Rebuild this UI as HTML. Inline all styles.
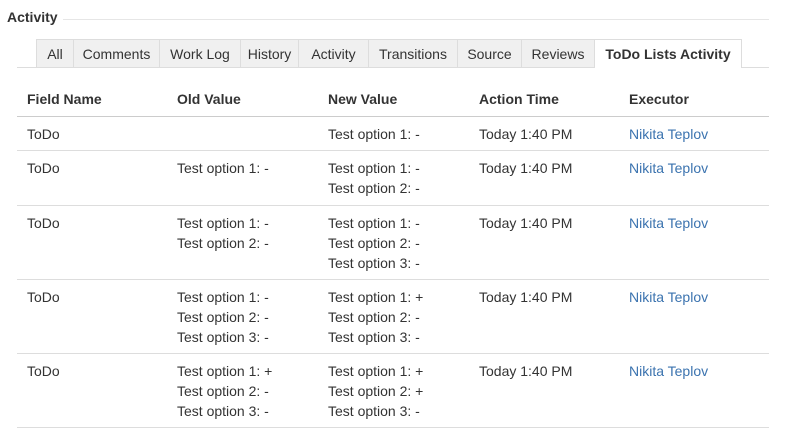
<!DOCTYPE html>
<html><head><style>
body{margin:0;background:#fff;font-family:"Liberation Sans",Arial,sans-serif;font-size:14px;color:#333;width:800px;height:431px;overflow:hidden;position:relative}
.h{position:absolute;left:7px;top:9px;font-weight:bold;font-size:14px}
.hl{position:absolute;left:63px;right:31px;top:19px;border-top:1px solid #e6e6e6}
.tabs{position:absolute;left:17px;right:31px;top:39px;height:28px;border-bottom:1px solid #ddd}
.tab{position:absolute;top:0;height:28px;background:#f0f0f0;border:1px solid #ddd;border-bottom:none;box-sizing:border-box;text-align:center;line-height:28px;color:#333}
.tab.a{background:#fff;font-weight:bold;height:29px}
table{position:absolute;left:17px;top:81px;width:752px;border-collapse:collapse}
th{text-align:left;font-weight:bold;height:35px;padding:0 10px;border-bottom:1px solid #ccc;vertical-align:middle}
td{vertical-align:top;padding:7px 10px 6px;line-height:20px;border-bottom:1px solid #ddd}
tr.r2 td{padding-bottom:7px}
a{color:#3b73af;text-decoration:none}
</style></head><body>
<div class="h">Activity</div><div class="hl"></div>
<div class="tabs">
<div class="tab" style="left:19px;width:38px">All</div>
<div class="tab" style="left:56px;width:87px">Comments</div>
<div class="tab" style="left:142px;width:82px">Work Log</div>
<div class="tab" style="left:223px;width:59px">History</div>
<div class="tab" style="left:281px;width:71px">Activity</div>
<div class="tab" style="left:351px;width:90px">Transitions</div>
<div class="tab" style="left:440px;width:65px">Source</div>
<div class="tab" style="left:504px;width:74px">Reviews</div>
<div class="tab a" style="left:577px;width:148px">ToDo Lists Activity</div>
</div>
<table>
<tr><th style="width:130px">Field Name</th><th style="width:131px">Old Value</th><th style="width:131px">New Value</th><th style="width:130px">Action Time</th><th>Executor</th></tr>
<tr><td>ToDo</td><td></td><td>Test option 1: -</td><td>Today 1:40 PM</td><td><a>Nikita Teplov</a></td></tr>
<tr class="r2"><td>ToDo</td><td>Test option 1: -</td><td>Test option 1: -<br>Test option 2: -</td><td>Today 1:40 PM</td><td><a>Nikita Teplov</a></td></tr>
<tr><td>ToDo</td><td>Test option 1: -<br>Test option 2: -</td><td>Test option 1: -<br>Test option 2: -<br>Test option 3: -</td><td>Today 1:40 PM</td><td><a>Nikita Teplov</a></td></tr>
<tr><td>ToDo</td><td>Test option 1: -<br>Test option 2: -<br>Test option 3: -</td><td>Test option 1: +<br>Test option 2: -<br>Test option 3: -</td><td>Today 1:40 PM</td><td><a>Nikita Teplov</a></td></tr>
<tr><td>ToDo</td><td>Test option 1: +<br>Test option 2: -<br>Test option 3: -</td><td>Test option 1: +<br>Test option 2: +<br>Test option 3: -</td><td>Today 1:40 PM</td><td><a>Nikita Teplov</a></td></tr>
</table>
</body></html>
